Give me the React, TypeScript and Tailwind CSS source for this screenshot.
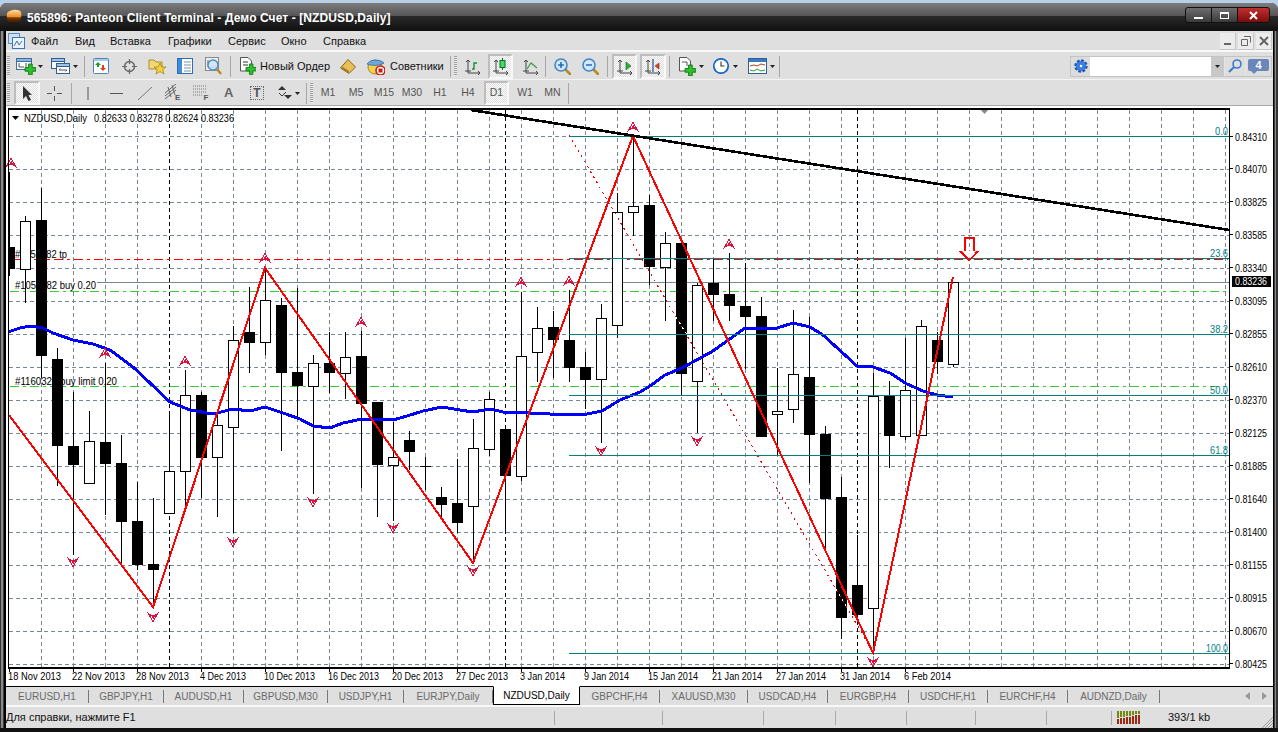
import React from "react";

type C = [number, "b" | "w", number, number, number, number];
const candles: C[] = [
  [9,"b",247,269,172,276],[25,"w",221,269,216,303],[41,"b",220,356,188,378],[57,"b",359,446,348,486],
  [73,"b",446,465,392,555],[89,"w",441,483,411,483],[105,"b",442,464,363,515],[121,"b",463,522,435,565],
  [137,"b",521,565,482,570],[153,"b",564,570,498,607],[169,"w",471,513,415,513],[185,"w",395,471,370,508],
  [201,"b",395,458,392,498],[217,"w",425,457,415,517],[233,"w",340,427,326,533],[249,"b",332,343,287,373],
  [265,"w",300,342,268,355],[281,"b",305,373,298,451],[297,"b",372,386,288,420],[313,"w",363,386,355,494],
  [329,"b",363,373,332,393],[345,"w",357,373,332,399],[361,"b",356,404,331,488],[377,"b",402,465,402,517],
  [393,"w",457,465,422,521],[409,"b",440,452,431,470],[425,"b",466,467,457,490],[441,"b",497,505,487,517],
  [457,"b",503,523,459,533],[473,"w",448,506,419,563],[489,"w",399,449,392,456],[505,"b",429,476,429,533],
  [521,"w",356,476,292,481],[537,"w",328,352,307,382],[553,"b",327,340,311,378],[569,"b",340,368,290,382],
  [585,"b",367,380,352,409],[601,"w",318,379,304,443],[617,"w",212,325,193,338],[633,"w",206,212,138,236],
  [649,"b",205,267,195,285],[665,"w",243,267,232,321],[681,"b",243,374,243,395],[697,"w",285,381,283,433],
  [713,"b",283,295,259,321],[729,"b",294,306,253,321],[745,"b",306,317,263,369],[761,"b",316,437,297,437],
  [777,"w",411,414,368,455],[793,"w",374,409,310,423],[809,"b",377,435,317,483],[825,"b",434,499,426,550],
  [841,"b",497,618,477,639],[857,"b",585,615,535,620],[873,"w",396,608,373,650],[889,"b",396,436,381,468],
  [905,"w",390,436,338,440],[921,"w",326,435,320,435],[937,"b",340,362,332,374],[953,"w",282,364,282,367],
];
const ma = "8,332 20,328 30,326 43,328 53,333 73,340 93,344 110,350 133,367 150,383 170,402 190,410 213,414 233,409 250,411 265,407 283,413 300,419 313,426 330,428 343,423 362,419 393,420 407,416 423,411 442,407 460,410 473,412 490,409 503,412 530,413 550,414 587,414 602,411 620,400 640,392 650,386 665,375 682,368 713,351 745,328 777,328 793,323 810,327 823,335 857,366 873,367 890,373 907,384 923,391 937,395 953,397";
const axis: [string, number][] = [["0.84310",137],["0.84070",169],["0.83825",202],["0.83585",235],["0.83340",268],["0.83095",301],["0.82855",334],["0.82610",367],["0.82370",400],["0.82125",433],["0.81885",466],["0.81640",499],["0.81400",532],["0.81155",565],["0.80915",598],["0.80670",631],["0.80425",664]];
const dates: [string, number, number][] = [["18 Nov 2013",8,53],["22 Nov 2013",72,53],["28 Nov 2013",136,53],["4 Dec 2013",200,46],["10 Dec 2013",264,51],["16 Dec 2013",328,51],["20 Dec 2013",392,51],["27 Dec 2013",456,52],["3 Jan 2014",520,45],["9 Jan 2014",584,45],["15 Jan 2014",648,50],["21 Jan 2014",712,50],["27 Jan 2014",776,50],["31 Jan 2014",840,50],["6 Feb 2014",904,47]];
const fib: [string, number, number][] = [["0.0",136.5,13],["23.6",258.5,18],["38.2",334.5,18],["50.0",395.5,18],["61.8",455.5,18],["100.0",653.5,22]];
const ups: [number, number][] = [[11,163],[105,353],[185,361],[265,258],[361,322],[521,282],[569,281],[633,127],[729,244]];
const downs: [number, number][] = [[73,562],[153,617],[233,542],[313,502],[393,528],[473,571],[601,451],[697,441],[873,662]];
const gridX = Array.from({ length: 38 }, (_, i) => 41.5 + 32 * i);
const gridY = Array.from({ length: 17 }, (_, i) => 136.5 + 33 * i);
const FONT = "'Liberation Sans', Arial, sans-serif";

const Marker = ({ x, y, flip }: { x: number; y: number; flip?: boolean }) => (
  <g transform={`translate(${x} ${y}) scale(1 ${flip ? -1 : 1})`}>
    <path d="M-5.500 4.500L0-4.500L5.500 4.500L2 1.500H-2Z" fill="none" stroke="#dc143c" strokeWidth={1} />
    <path d="M-1.500 2L0-2.500L2.500 2.500L1 1Z" fill="#dc143c" />
  </g>
);

function Chart() {
  return (
    <svg viewBox="6 106 1267 580" className="block w-[1267px] h-[580px] bg-white" fontFamily={FONT}>
      <g shapeRendering="crispEdges">
        {gridX.map((x) => <line key={x} x1={x} x2={x} y1={110} y2={667} stroke="#778899" strokeDasharray="4 3" />)}
        {gridY.map((y) => <line key={y} x1={9} x2={1229} y1={y} y2={y} stroke="#778899" strokeDasharray="4 3" />)}
        {[169.5, 505.5, 857.5].map((x) => <line key={x} x1={x} x2={x} y1={110} y2={667} stroke="#000" strokeDasharray="4 3" />)}
        <line x1={14} x2={1228} y1={259.5} y2={259.5} stroke="#f00" strokeDasharray="9 4 3 4" />
        <line x1={97} x2={1229} y1={282.5} y2={282.5} stroke="#778899" />
        <line x1={10} x2={1226} y1={291.5} y2={291.5} stroke="#32cd32" strokeDasharray="9 4 3 4" />
        <line x1={10} x2={1226} y1={386.5} y2={386.5} stroke="#32cd32" strokeDasharray="9 4 3 4" />
      </g>
      <g fontSize="11" fill="#000">
        <text x={15} y={258} textLength={52} lengthAdjust="spacingAndGlyphs">#1059282 tp</text>
        <text x={15} y={289} textLength={81} lengthAdjust="spacingAndGlyphs">#1059282 buy 0.20</text>
        <text x={15} y={385} textLength={102} lengthAdjust="spacingAndGlyphs">#1160324 buy limit 0.20</text>
      </g>
      <g shapeRendering="crispEdges">
        {candles.map(([x, t, a, b, hi, lo]) => (
          <g key={x}>
            <line x1={x + 0.5} x2={x + 0.5} y1={hi} y2={lo} stroke="#000" />
            {t === "b"
              ? <rect x={Math.max(x - 5, 9)} y={a} width={x - 5 < 9 ? x + 6 - 9 : 11} height={b - a} fill="#000" />
              : <rect x={x - 4.5} y={a + 0.5} width={10} height={b - a} fill="#fff" stroke="#000" />}
          </g>
        ))}
        <polyline points={ma} fill="none" stroke="#0000ff" strokeWidth={3} />
        {fib.map(([, y]) => <line key={y} x1={569} x2={1229} y1={y} y2={y} stroke="#008080" />)}
        <polyline points="9,415 153,607 265,268 473,563 633,136 873,653 953,277" fill="none" stroke="#f00" strokeWidth={2} />
        <line x1={569} y1={135} x2={873} y2={652} stroke="#f00" strokeDasharray="2 4" />
        <line x1={676} y1={317} x2={687} y2={335} stroke="#fff" strokeDasharray="2 4" />
        <line x1={836} y1={589} x2={847} y2={608} stroke="#fff" strokeDasharray="2 4" />
        <line x1={471} y1={110} x2={1229} y2={230} stroke="#000" strokeWidth={2.6} />
      </g>
      <g shapeRendering="crispEdges">
        {ups.map(([x, y]) => <Marker key={x} x={x} y={y} />)}
        {downs.map(([x, y]) => <Marker key={x} x={x} y={y} flip />)}
      </g>
      <path d="M963.5 251V236.5H974.5V251H979L969 261.5L958.5 251ZM965.5 253V238.5H972.5V253H975L969 259L963 253Z" fill="#f00" fillRule="evenodd" shapeRendering="crispEdges" />
      <path d="M962 251H976L969 258Z" fill="#fff" />
      <path d="M980 109H989L984.500 114Z" fill="#888" />
      <g fontSize="11" fill="#008080">
        {fib.map(([l, y, w]) => <text key={l} x={1228} y={y - 2} textAnchor="end" textLength={w} lengthAdjust="spacingAndGlyphs">{l}</text>)}
      </g>
      <g shapeRendering="crispEdges">
        <rect x={8.5} y={109} width={1221} height={559} fill="none" stroke="#000" strokeWidth={1.5} />
        {axis.map(([, y]) => <line key={y} x1={1229} x2={1233} y1={y - 0.5} y2={y - 0.5} stroke="#000" />)}
        {dates.map(([, x]) => <line key={x} x1={x + 1.5} x2={x + 1.5} y1={668} y2={672} stroke="#000" />)}
      </g>
      <g fontSize="10.5" fill="#000">
        {axis.map(([l, y]) => <text key={l} x={1235} y={y + 3.5} textLength={32} lengthAdjust="spacingAndGlyphs">{l}</text>)}
      </g>
      <g fontSize="11" fill="#000">
        {dates.map(([l, x, w]) => <text key={l} x={x} y={680} textLength={w} lengthAdjust="spacingAndGlyphs">{l}</text>)}
      </g>
      <rect x={1232} y={276} width={39} height={11} fill="#000" />
      <text x={1235} y={285} fontSize="10.5" fill="#fff" textLength={32} lengthAdjust="spacingAndGlyphs">0.83236</text>
      <path d="M12 116H19L15.500 120Z" fill="#000" />
      <text x={24} y={122} fontSize="11" fill="#000" textLength={63} lengthAdjust="spacingAndGlyphs">NZDUSD,Daily</text>
      <text x={94} y={122} fontSize="11" fill="#000" textLength={140} lengthAdjust="spacingAndGlyphs">0.82633 0.83278 0.82624 0.83236</text>
    </svg>
  );
}

const dither = "bg-[conic-gradient(#dcdcdc_25%,#ffffff_0_50%,#dcdcdc_0_75%,#ffffff_0)] bg-[length:2px_2px] border-t-2 border-l-2 border-t-[#bdbdbd] border-l-[#bdbdbd] border-b-2 border-r-2 border-b-[#f8f8f8] border-r-[#f8f8f8]";

const Caret = ({ className }: { className: string }) => (
  <svg viewBox="0 0 5 3" className={`${className} h-[3px] shrink-0`}><path d="M0 0H5L2.500 3Z" fill="#222" /></svg>
);
const Sep = ({ className }: { className: string }) => <div className={`${className} w-px h-[21px] bg-[#a6a6a6] shrink-0`} />;
const Grip = ({ className }: { className: string }) => (
  <div className={`${className} w-[3px] h-[20px] shrink-0 bg-[repeating-linear-gradient(#a0a0a0_0,#a0a0a0_1px,#e8e8e8_1px,#e8e8e8_2px)]`} />
);
const Plus = ({ x, y, s = 1 }: { x: number; y: number; s?: number }) => (
  <path transform={`translate(${x} ${y}) scale(${s})`} d="M3 0H6V3H9V6H6V9H3V6H0V3H3Z" fill="#2fc02f" stroke="#137a13" strokeWidth={0.8} />
);
const Ic = ({ className, w, h, children }: { className: string; w: number; h: number; children: React.ReactNode }) => (
  <svg viewBox={`0 0 ${w} ${h}`} width={w} height={h} className={`${className} shrink-0`}>{children}</svg>
);
const Axes = ({ color = "#444" }: { color?: string }) => (
  <path d="M3 1V14H15M1 3L3 1L5 3M13 12L15 14L13 16M0 12H6" transform="translate(0 1)" fill="none" stroke={color} strokeWidth={1} />
);
const Magnifier = ({ minus }: { minus?: boolean }) => (
  <>
    <path d="M11 11L16 16" stroke="#b98a1f" strokeWidth={2.6} strokeLinecap="round" />
    <circle cx={7} cy={7} r={6} fill="#d5e8fa" stroke="#3f86c7" strokeWidth={1.6} />
    <path d={minus ? "M4 7H10" : "M4 7H10M7 4V10"} stroke="#1f6fb8" strokeWidth={1.6} />
  </>
);

function Row1() {
  return (
    <div className="h-[28px] pt-px flex items-center border-b border-[#f4f4f4] bg-[#dfdfdf] text-[11px] text-[#111]">
      <Grip className="ml-px" />
      <Ic className="ml-[6px]" w={20} h={18}>
        <rect x={0.5} y={1.5} width={15} height={11} fill="#fff" stroke="#3a6ea5" />
        <rect x={0.5} y={1.5} width={15} height={3} fill="#8db4dc" stroke="#3a6ea5" />
        <path d="M3 6V10M3 10H8M10 6V10" stroke="#555" />
        <Plus x={9} y={7} s={1.2} />
      </Ic>
      <Caret className="ml-[2px] w-[5px]" />
      <Ic className="ml-[8px]" w={19} h={18}>
        <rect x={0.5} y={1.5} width={13} height={10} fill="#fff" stroke="#2e5f96" />
        <rect x={0.5} y={1.5} width={13} height={3} fill="#9fc2e6" stroke="#2e5f96" />
        <rect x={5.500} y={6.5} width={13} height={10} fill="#fff" stroke="#2e5f96" />
        <rect x={5.500} y={6.5} width={13} height={3} fill="#9fc2e6" stroke="#2e5f96" />
        <path d="M8 13H16M8 13L9.500 11.500M16 13L14.500 14.500" stroke="#555" fill="none" />
      </Ic>
      <Caret className="ml-[3px] w-[5px]" />
      <Sep className="ml-[6px]" />
      <Ic className="ml-[8px]" w={16} h={17}>
        <rect x={0.5} y={0.5} width={15} height={15} rx={1} fill="#fff" stroke="#4b84bd" />
        <rect x={1} y={1} width={14} height={2} fill="#a9cbea" />
        <path d="M5 4L8 7H6V9H4V7H2Z" fill="#1ca01c" />
        <path d="M10 13L7 10H9V7H11V10H13Z" fill="#d8401f" />
      </Ic>
      <Ic className="ml-[13px]" w={15} h={15}>
        <circle cx={7.500} cy={7.500} r={5} fill="none" stroke="#666" strokeWidth={1.4} />
        <path d="M7.500 0V5M7.500 10V15M0 7.500H5M10 7.500H15" stroke="#666" strokeWidth={1.2} />
      </Ic>
      <Ic className="ml-[11px]" w={18} h={18}>
        <path d="M1 3H6L8 5H14V12H1Z" fill="#f4d775" stroke="#a98b2a" />
        <path d="M12 6L13.800 10H18L14.700 12.500L16 17L12 14.500L8 17L9.300 12.500L6 10H10.200Z" fill="#f7d23f" stroke="#a68512" strokeWidth={0.8} />
      </Ic>
      <Ic className="ml-[11px]" w={16} h={16}>
        <rect x={0.5} y={0.5} width={15} height={15} fill="#fff" stroke="#2e6db0" />
        <rect x={1} y={1} width={4} height={14} fill="#3f8cd8" />
        <path d="M7 4H14M7 7H14M7 10H14M7 13H14" stroke="#7f93a8" />
      </Ic>
      <Ic className="ml-[12px]" w={17} h={18}>
        <rect x={0.5} y={0.5} width={13} height={13} fill="#eee" stroke="#8a8a8a" />
        <path d="M3 3V10H11" stroke="#666" fill="none" />
        <path d="M12 12L16 17" stroke="#b98a1f" strokeWidth={2.4} />
        <circle cx={8} cy={8} r={5} fill="#cfe4f7" fillOpacity={0.85} stroke="#4a8cc5" strokeWidth={1.4} />
      </Ic>
      <Sep className="ml-[8px]" />
      <Ic className="ml-[9px]" w={16} h={18}>
        <path d="M0.5 0.5H8L11.500 4V14H0.500Z" fill="#fff" stroke="#555" />
        <path d="M3 5H8M3 8H8" stroke="#333" />
        <Plus x={6} y={7} s={1.15} />
      </Ic>
      <span className="ml-[4px] w-[69px] whitespace-nowrap">Новый Ордер</span>
      <Ic className="ml-[11px]" w={16} h={15}>
        <path d="M0.500 9L8 0.500L15.500 8L9 14.500Z" fill="#e9bf5c" stroke="#8a6416" />
        <path d="M1 9L9 14L9 12L3 8Z" fill="#a97c1f" />
      </Ic>
      <Ic className="ml-[11px]" w={18} h={18}>
        <circle cx={8} cy={10} r={7} fill="#f7d24a" stroke="#a4851f" />
        <path d="M0 7C3 2 13 2 17 6C12 9 5 9 0 7Z" fill="#6ea7dc" stroke="#2e6aa6" strokeWidth={0.8} />
        <circle cx={13.500} cy={13.500} r={4.500} fill="#fff" stroke="#c81e12" strokeWidth={1.6} />
        <rect x={11.500} y={11.500} width={4} height={4} fill="#c81e12" />
      </Ic>
      <span className="ml-[5px] w-[55px] whitespace-nowrap">Советники</span>
      <Sep className="ml-[5px]" />
      <Grip className="ml-[3px]" />
      <Ic className="ml-[8px]" w={16} h={17}>
        <Axes />
        <path d="M7 11H9V5H12" fill="none" stroke="#11913a" strokeWidth={1.4} />
      </Ic>
      <div className={`${dither} ml-[7px] w-[25px] h-[25px] shrink-0 flex items-center justify-center`}>
        <Ic className="" w={16} h={17}>
          <Axes />
          <path d="M9.500 0V12" stroke="#0c6a2c" />
          <rect x={7} y={2.5} width={5} height={7} fill="#3fe060" stroke="#0c6a2c" />
        </Ic>
      </div>
      <Ic className="ml-[10px]" w={15} h={17}>
        <Axes />
        <path d="M4 11L8 5L14 10" fill="none" stroke="#3c9c4c" strokeWidth={1.2} />
      </Ic>
      <Sep className="ml-[7px]" />
      <Ic className="ml-[8px]" w={17} h={17}><Magnifier /></Ic>
      <Ic className="ml-[11px]" w={17} h={17}><Magnifier minus /></Ic>
      <Sep className="ml-[8px]" />
      <div className={`${dither} ml-[4px] w-[25px] h-[25px] shrink-0 flex items-center justify-center`}>
        <Ic className="" w={16} h={17}>
          <Axes />
          <path d="M9 4L14 8L9 12Z" fill="#2fae3a" stroke="#0c6a2c" strokeWidth={0.6} />
        </Ic>
      </div>
      <div className={`${dither} ml-[3px] w-[26px] h-[25px] shrink-0 flex items-center justify-center`}>
        <Ic className="" w={16} h={17}>
          <Axes />
          <path d="M8 1V14" stroke="#1f4f8f" strokeWidth={1.2} />
          <path d="M14 5L10 8L14 11Z" fill="#d8401f" stroke="#8a2a10" strokeWidth={0.6} />
        </Ic>
      </div>
      <Sep className="ml-[3px]" />
      <Ic className="ml-[9px]" w={17} h={20}>
        <path d="M0.5 1.5H8L11.500 5V15H0.500Z" fill="#fff" stroke="#555" />
        <path d="M3 6H8V10" stroke="#555" fill="none" />
        <Plus x={6} y={9} s={1.2} />
      </Ic>
      <Caret className="ml-[3px] w-[5px]" />
      <Ic className="ml-[9px]" w={16} h={16}>
        <circle cx={8} cy={8} r={7.200} fill="#fff" stroke="#1c67c4" strokeWidth={1.7} />
        <path d="M8 3.500V8H11.500" fill="none" stroke="#333" strokeWidth={1.1} />
      </Ic>
      <Caret className="ml-[4px] w-[5px]" />
      <Ic className="ml-[10px]" w={19} h={16}>
        <rect x={0.5} y={0.5} width={18} height={15} fill="#fff" stroke="#2c5f99" />
        <rect x={1} y={1} width={17} height={3} fill="#3a78bf" />
        <path d="M2 8L6 7L9 8L13 6L17 7" fill="none" stroke="#b04020" />
        <path d="M2 12L6 13L9 11L13 13L17 12" fill="none" stroke="#2f9a2f" />
      </Ic>
      <Caret className="ml-[3px] w-[5px]" />
      <Sep className="ml-[4px]" />
      <div className="ml-auto mr-px flex h-[21px] w-[202px] border border-[#c4c4c4] bg-[#e6e6e6]">
        <div className="w-[19px] flex items-center justify-center bg-[#dcdcdc]">
          <Ic className="" w={14} h={14}>
            <circle cx={7} cy={7} r={5.200} fill="#2d6fd8" stroke="#1f55ad" strokeWidth={3} strokeDasharray="2.500 1.500" />
            <circle cx={7} cy={7} r={4.800} fill="#3b7ee0" />
            <circle cx={7} cy={7} r={1.200} fill="#fff" />
          </Ic>
        </div>
        <div className="w-[121px] bg-white" />
        <div className="w-[13px] flex items-center justify-center bg-[#c8c8c8]"><Caret className="w-[5px]" /></div>
        <div className="w-[20px] flex items-center justify-center bg-[#dedede] ml-px">
          <Ic className="" w={14} h={14}>
            <circle cx={9} cy={5} r={4} fill="none" stroke="#3d78d0" strokeWidth={1.6} />
            <path d="M6 8L1 13" stroke="#3d78d0" strokeWidth={2} />
          </Ic>
        </div>
        <div className="flex-1 flex items-center justify-center bg-[#dedede] ml-px">
          <div className="relative w-[21px] h-[12px] rounded-[2px] bg-[#6b86b8] text-white text-[11px] font-bold leading-[12px] text-center mb-[2px]">
            4
            <div className="absolute left-[3px] top-[12px] w-0 h-0 border-t-[3px] border-t-[#6b86b8] border-l-[3px] border-l-transparent border-r-[3px] border-r-transparent" />
          </div>
        </div>
      </div>
    </div>
  );
}

function Row2() {
  const P = ({ t, w }: { t: string; w: string }) => <span className={`${w} text-center shrink-0`}>{t}</span>;
  return (
    <div className="h-[26px] pt-px flex items-center border-b border-[#a8a8a8] bg-[#dfdfdf] text-[10.5px] text-[#555]">
      <Grip className="ml-px" />
      <div className={`${dither} ml-[4px] w-[26px] h-[24px] shrink-0 flex items-center justify-center`}>
        <Ic className="" w={12} h={17}>
          <path d="M2 1V14L5 11L7.500 16L10 15L7.500 10H11Z" fill="#333" />
        </Ic>
      </div>
      <Ic className="ml-[7px]" w={15} h={15}>
        <path d="M7.500 0V5M7.500 10V15M0 7.500H5M10 7.500H15" stroke="#555" />
      </Ic>
      <Sep className="ml-[9px]" />
      <Ic className="ml-[13px]" w={6} h={13}><path d="M3 0V13" stroke="#555" /></Ic>
      <Ic className="ml-[19px]" w={13} h={3}><path d="M0 1.500H13" stroke="#555" /></Ic>
      <Ic className="ml-[15px]" w={14} h={13}><path d="M0 13L14 0" stroke="#777" /></Ic>
      <Ic className="ml-[13px]" w={16} h={18}>
        <path d="M0 9L11 0M0 12L11 3M0 15L11 6M3 3L6 13M7 1L10 11" stroke="#666" fill="none" />
        <text x={10} y={16} fontSize="8" fontWeight="bold" fontFamily={FONT} fill="#555">E</text>
      </Ic>
      <Ic className="ml-[12px]" w={16} h={18}>
        <path d="M0 2H14M0 5H14M0 8H14M0 11H10" stroke="#777" strokeDasharray="1 1" />
        <text x={10.500} y={16} fontSize="8" fontWeight="bold" fontFamily={FONT} fill="#555">F</text>
      </Ic>
      <span className="ml-[15px] w-[9px] text-[13px] font-bold text-[#666] text-center">A</span>
      <div className="ml-[17px] w-[14px] h-[14px] border border-dotted border-[#666] shrink-0 flex items-center justify-center text-[12px] font-bold text-[#555] leading-none">T</div>
      <Ic className="ml-[14px]" w={14} h={14}>
        <path d="M4 0L8 4H0ZM10 13L6 9H14Z" fill="#333" />
        <path d="M1 7L4 10L8 6" stroke="#333" fill="none" />
      </Ic>
      <Caret className="ml-[3px] w-[5px]" />
      <Sep className="ml-[6px]" />
      <Grip className="ml-[3px]" />
      <P t="M1" w="ml-px w-[28px]" />
      <P t="M5" w="w-[28px]" />
      <P t="M15" w="w-[28px]" />
      <P t="M30" w="w-[28px]" />
      <P t="H1" w="w-[28px]" />
      <P t="H4" w="w-[28px]" />
      <div className={`${dither} ml-[2px] w-[25px] h-[24px] shrink-0 flex items-center justify-center`}>D1</div>
      <P t="W1" w="ml-[2px] w-[28px]" />
      <P t="MN" w="w-[27px]" />
      <Sep className="ml-[2px]" />
    </div>
  );
}

const tabs: [string, string][] = [["EURUSD,H1","w-[83px]"],["GBPJPY,H1","w-[75px]"],["AUDUSD,H1","w-[80px]"],["GBPUSD,M30","w-[84px]"],["USDJPY,H1","w-[76px]"],["EURJPY,Daily","w-[89px]"]];
const tabs2: [string, string][] = [["GBPCHF,H4","w-[80px]"],["XAUUSD,M30","w-[88px]"],["USDCAD,H4","w-[80px]"],["EURGBP,H4","w-[81px]"],["USDCHF,H1","w-[79px]"],["EURCHF,H4","w-[80px]"],["AUDNZD,Daily","w-[92px]"]];
const Tab = ({ t, w }: { t: string; w: string }) => (
  <div className={`${w} h-[13px] mt-[3px] border-r border-[#777] flex items-center justify-center shrink-0 text-[#6a6a6a] whitespace-nowrap`}>{t}</div>
);
const statusCells = ["w-[108px]", "w-[101px]", "w-[72px]", "w-[71px]", "w-[69px]", "w-[71px]", "w-[65px]"];

export default function App() {
  return (
    <div className="w-[1278px] h-[732px] overflow-hidden bg-[#b9cfe9] pt-[3px] font-['Liberation_Sans',Arial,sans-serif]">
      <div className="h-[729px] rounded-t-[7px] bg-[#1c1c1c] flex flex-col overflow-hidden">
        <div className="h-[28px] shrink-0 flex items-center bg-[linear-gradient(#7d7d7d_0,#565656_45%,#2a2a2a_46%,#101010_100%)]">
          <svg viewBox="0 0 16 16" width={16} height={16} className="ml-[6px] shrink-0">
            <defs>
              <linearGradient id="lg" x1="0" y1="0" x2="0" y2="1">
                <stop offset="0" stopColor="#ffd9a0" /><stop offset="0.5" stopColor="#f08a20" /><stop offset="0.55" stopColor="#7a3a08" /><stop offset="1" stopColor="#1c1005" />
              </linearGradient>
            </defs>
            <path d="M1 5C1 1 13 -1 15 3C16 8 15 14 9 15C3 16 0 11 1 5Z" fill="url(#lg)" />
          </svg>
          <span className="ml-[5px] mt-[1px] text-[12px] font-bold text-white tracking-[0.1px] whitespace-nowrap">565896: Panteon Client Terminal - Демо Счет - [NZDUSD,Daily]</span>
          <div className="ml-auto mr-[8px] mb-[4px] flex h-[16px] w-[85px] rounded-[3px] border border-[#111] bg-[#111] gap-px shrink-0">
            <div className="w-[25px] rounded-l-[2px] bg-[linear-gradient(#6e6e6e,#3a3a3a)] flex items-end justify-center pb-[2px]"><div className="w-[9px] h-[2px] bg-white mb-px" /></div>
            <div className="w-[25px] bg-[linear-gradient(#6e6e6e,#3a3a3a)] flex items-center justify-center"><div className="w-[9px] h-[7px] border border-t-2 border-white" /></div>
            <div className="flex-1 rounded-r-[2px] bg-[linear-gradient(#c03030,#7e0c0c)] flex items-center justify-center">
              <svg viewBox="0 0 9 9" width={9} height={9}><path d="M1 1L8 8M8 1L1 8" stroke="#fff" strokeWidth={2} /></svg>
            </div>
          </div>
        </div>
        <div className="flex-1 flex min-h-0">
          <div className="w-[6px] shrink-0 bg-[linear-gradient(90deg,#333_0,#333_25%,#8a8a8a_25%,#8a8a8a_42%,#3a3a3a_42%,#3a3a3a_75%,#000_75%)]" />
          <div className="w-[1267px] flex flex-col">
            <div className="h-[21px] pt-px shrink-0 flex items-center bg-[#dfdfdf] border-b-2 border-[#f8f8f8] text-[11px] text-[#111]">
              <svg viewBox="0 0 17 16" width={17} height={16} className="ml-[2px] shrink-0">
                <rect x={0.5} y={0.5} width={11} height={10} fill="#cfe0f4" stroke="#5b8dc6" />
                <rect x={4.5} y={4.5} width={12} height={11} fill="#eaf2fb" stroke="#3f74b6" />
                <path d="M6 13L9 8L11 12L14 8" fill="none" stroke="#3f74b6" />
              </svg>
              <span className="ml-[6px] w-[44px]">Файл</span>
              <span className="w-[35px]">Вид</span>
              <span className="w-[58px]">Вставка</span>
              <span className="w-[60px]">Графики</span>
              <span className="w-[53px]">Сервис</span>
              <span className="w-[42px]">Окно</span>
              <span>Справка</span>
              <div className="ml-auto mr-px flex gap-[2px]">
                {[0, 1, 2].map((i) => (
                  <div key={i} className="w-[16px] h-[17px] bg-[#ececec] border-r border-b border-[#c4c4c4] flex items-center justify-center">
                    <svg viewBox="0 0 10 10" width={10} height={10}>
                      {i === 0 && <path d="M1 8H8" stroke="#666" strokeWidth={2} />}
                      {i === 1 && <path d="M3 .5H9.500V6.500M.5 3.500H6.500V9.500H.5Z" fill="none" stroke="#666" />}
                      {i === 2 && <path d="M1 1L9 9M9 1L1 9" stroke="#666" strokeWidth={2} />}
                    </svg>
                  </div>
                ))}
              </div>
            </div>
            <Row1 />
            <Row2 />
            <Chart />
            <div className="h-[21px] shrink-0 flex bg-[#dfdfdf] border-t border-t-black border-b-2 border-b-[#f8f8f8] text-[10px]">
              {tabs.map(([t, w]) => <Tab key={t} t={t} w={w} />)}
              <div className="w-[87px] h-[19px] -mt-px bg-white border-x border-b border-black flex items-center justify-center text-black shrink-0 border-t border-t-white">NZDUSD,Daily</div>
              {tabs2.map(([t, w]) => <Tab key={t} t={t} w={w} />)}
              <div className="ml-auto mr-[6px] mt-[5px] flex gap-[12px]">
                <svg viewBox="0 0 5 8" width={5} height={8}><path d="M5 0V8L0 4Z" fill="#999" /></svg>
                <svg viewBox="0 0 5 8" width={5} height={8}><path d="M0 0V8L5 4Z" fill="#999" /></svg>
              </div>
            </div>
            <div className="flex-1 flex items-center bg-[#dfdfdf] text-[11px] text-[#111] relative">
              <span className="w-[548px] shrink-0 whitespace-nowrap">Для справки, нажмите F1</span>
              {statusCells.map((w) => (
                <div key={w} className={`${w} h-[14px] border-l border-[#a8a8a8] shrink-0`} />
              ))}
              <div className="h-[14px] border-l border-[#a8a8a8] shrink-0 flex items-center">
                <svg viewBox="0 0 23 13" width={23} height={13} className="ml-[5px]" shapeRendering="crispEdges">
                  {Array.from({ length: 8 }, (_, i) => (
                    <g key={i}>
                      <rect x={i * 3} y={0} width={2} height={7 - i * 0.6} fill="#6f8b10" />
                      <rect x={i * 3} y={8 - i * 0.6} width={2} height={5 + i * 0.6} fill="#9a2a10" />
                    </g>
                  ))}
                </svg>
                <span className="ml-[28px] whitespace-nowrap">393/1 kb</span>
              </div>
              <svg viewBox="0 0 12 12" width={12} height={12} className="absolute right-0 bottom-0">
                <path d="M12 1L1 12M12 4L4 12M12 7L7 12M12 10L10 12" stroke="#999" />
              </svg>
            </div>
          </div>
          <div className="w-[5px] shrink-0 bg-[linear-gradient(90deg,#000_0,#000_20%,#3a3a3a_20%,#3a3a3a_50%,#8a8a8a_50%,#8a8a8a_70%,#333_70%)]" />
        </div>
        <div className="h-[4px] shrink-0 bg-[#111]" />
      </div>
    </div>
  );
}
